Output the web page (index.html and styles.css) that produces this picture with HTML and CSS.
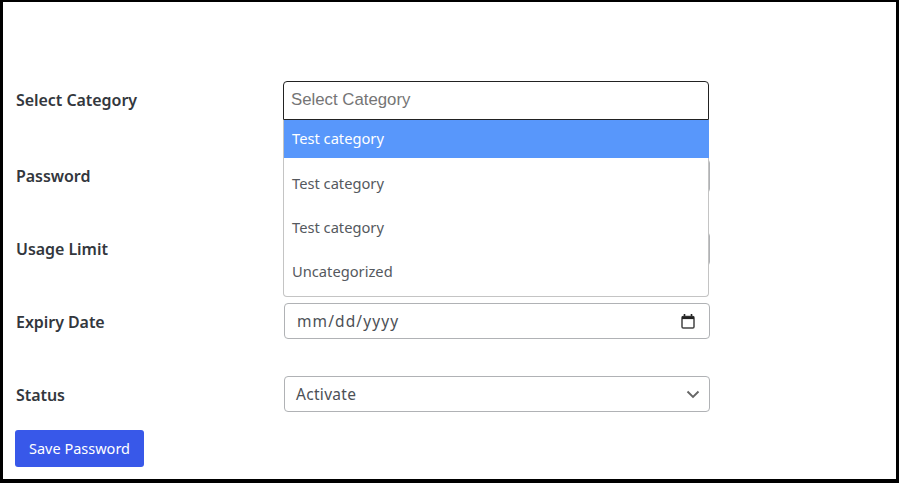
FILE: index.html
```html
<!DOCTYPE html>
<html lang="en">
<head>
<meta charset="utf-8">
<title>Save Password</title>
<link rel="stylesheet" href="styles.css">
</head>
<body>
<main class="frame">
  <form class="form">
    <div class="row row-category">
      <label class="label label-high">Select Category</label>
      <div class="combo">
        <div class="combo-input">Select Category</div>
        <ul class="combo-list">
          <li class="combo-option combo-option-active">Test category</li>
          <li class="combo-option combo-option-2">Test category</li>
          <li class="combo-option combo-option-3">Test category</li>
          <li class="combo-option combo-option-4">Uncategorized</li>
        </ul>
      </div>
    </div>
    <div class="row row-password">
      <label class="label">Password</label>
      <div class="field field-plain"></div>
    </div>
    <div class="row row-usage">
      <label class="label">Usage Limit</label>
      <div class="field field-plain"></div>
    </div>
    <div class="row row-expiry">
      <label class="label label-low">Expiry Date</label>
      <div class="field field-date">
        <span class="date-text">mm/dd/yyyy</span>
        <svg class="cal-icon" width="14" height="15" viewBox="0 0 14 15" aria-hidden="true">
          <path d="M3.5 0v2.5M10.5 0v2.5" stroke="#222" stroke-width="1.6" fill="none"/>
          <rect x="1" y="2.5" width="12" height="11.5" rx="1.2" fill="none" stroke="#444" stroke-width="1.5"/>
          <rect x="1" y="2.5" width="12" height="2.6" fill="#222"/>
        </svg>
      </div>
    </div>
    <div class="row row-status">
      <label class="label label-low">Status</label>
      <div class="field field-select">
        <span class="select-text">Activate</span>
        <svg class="chev-icon" width="14" height="10" viewBox="0 0 14 10" aria-hidden="true">
          <path d="M1.5 2.5L7 8l5.5-5.5" fill="none" stroke="#666" stroke-width="1.9"/>
        </svg>
      </div>
    </div>
    <button type="button" class="save">Save Password</button>
  </form>
</main>
</body>
</html>
```
FILE: styles.css
```css
* { box-sizing: border-box; }
html, body { margin: 0; padding: 0; width: 899px; height: 483px; overflow: hidden; background: #fff; }
.frame {
  width: 899px;
  height: 483px;
  border: solid #000;
  border-width: 2px 3px 4px 3px;
  background: #fff;
  font-family: "Noto Sans", "Open Sans", sans-serif;
  color: #3c4043;
}
.form { padding: 0 0 0 13px; }
.row { display: grid; grid-template-columns: 267px 426px; align-items: center; }
.label { font-size: 16px; font-weight: 600; letter-spacing: -0.05px; color: #33373d; line-height: 20px; }
.label-low { position: relative; top: 1px; }
.label-high { position: relative; top: -1px; }
.row-category { margin-top: 79px; height: 39px; position: relative; z-index: 2; }
.row-password { margin-top: 39px; height: 34px; }
.row-usage { margin-top: 39px; height: 34px; }
.row-expiry { margin-top: 37px; height: 36px; }
.row-status { margin-top: 37px; height: 36px; }
.combo { position: relative; height: 39px; width: 426px; }
.combo-input {
  height: 39px;
  border: 1.5px solid #222;
  border-radius: 4px 4px 0 0;
  padding: 0 7px;
  font: 16.8px/36px "Liberation Sans", Arial, sans-serif;
  color: #757575;
  background: #fff;
}
.combo-list {
  position: absolute;
  top: 39px;
  left: 0;
  width: 426px;
  height: 177px;
  margin: 0;
  padding: 0;
  list-style: none;
  background: #fff;
  border: solid #c4c4c4;
  border-width: 0 1.5px 1.5px 1px;
  border-radius: 0 0 4px 4px;
}
.combo-option {
  padding-left: 8px;
  font-size: 14.7px;
  line-height: 20px;
  color: #55595e;
}
.combo-option-active {
  background: #5897fb;
  color: #fff;
  height: 38px;
  line-height: 36px;
  margin-right: -0.5px;
}
.combo-option-2 { margin-top: 15px; }
.combo-option-3 { margin-top: 24px; }
.combo-option-4 { margin-top: 24px; }
.field {
  width: 426px;
  border: 1.5px solid #b0b2b5;
  border-radius: 4px;
  background: #fff;
  height: 100%;
}
.field-plain { margin-left: 1px; }
.field-date, .field-select {
  margin-left: 1px;
  display: flex;
  align-items: center;
  justify-content: space-between;
  font-size: 16px;
  color: #4c5056;
}
.field-date { padding: 0 14px 0 12px; }
.field-select { padding: 0 9px 0 11px; }
.date-text { letter-spacing: 1.1px; font-size: 15.5px; }
.select-text { font-size: 15.5px; letter-spacing: 0.3px; }
.cal-icon, .chev-icon { display: block; flex: none; }
.save {
  display: block;
  margin: 18px 0 0 -1px;
  width: 129px;
  height: 37px;
  background: #3858e9;
  color: #fff;
  border: 0;
  border-radius: 3px;
  font: 14.5px "Noto Sans", "Open Sans", sans-serif;
  padding: 0 0 2px;
}
```
